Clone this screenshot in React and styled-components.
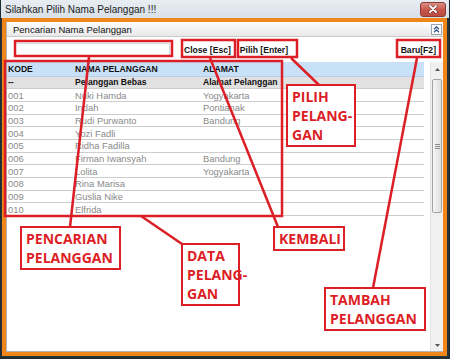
import styled, { createGlobalStyle } from "styled-components";

const GlobalStyle = createGlobalStyle`
  html, body { margin: 0; padding: 0; background: #ffffff; }
  body {
    font-family: "Liberation Sans", Arial, sans-serif;
    overflow: hidden;
  }
`;

const RED = "#dc1e26";

const customers = [
  { kode: "--", nama: "Pelanggan Bebas", alamat: "Alamat Pelanggan", bold: true },
  { kode: "001", nama: "Nuki Hamda", alamat: "Yogyakarta" },
  { kode: "002", nama: "Indah", alamat: "Pontianak" },
  { kode: "003", nama: "Rudi Purwanto", alamat: "Bandung" },
  { kode: "004", nama: "Yozi Fadli", alamat: "" },
  { kode: "005", nama: "Ridha Fadilla", alamat: "" },
  { kode: "006", nama: "Firman Iwansyah", alamat: "Bandung" },
  { kode: "007", nama: "Lolita", alamat: "Yogyakarta" },
  { kode: "008", nama: "Rina Marisa", alamat: "" },
  { kode: "009", nama: "Guslia Nike", alamat: "" },
  { kode: "010", nama: "Elfrida", alamat: "" },
];

const callouts = [
  { lines: ["PILIH", "PELANG-", "GAN"], left: 285, top: 84, width: 70 },
  { lines: ["PENCARIAN", "PELANGGAN"], left: 19, top: 226, width: 101 },
  { lines: ["DATA", "PELANG-", "GAN"], left: 180, top: 243, width: 59 },
  { lines: ["KEMBALI"], left: 272, top: 226, width: 72 },
  { lines: ["TAMBAH", "PELANGGAN"], left: 323, top: 287, width: 102 },
];

const highlights = [
  { x: 14, y: 41, w: 157, h: 15 },
  { x: 181, y: 40, w: 53, h: 17 },
  { x: 237, y: 40, w: 59, h: 17 },
  { x: 396, y: 40, w: 43, h: 17 },
  { x: 4, y: 61, w: 277, h: 155 },
];

const pointers = [
  [88, 57, 69, 227],
  [140, 216, 181, 244],
  [209, 58, 277, 227],
  [290, 58, 318, 85],
  [416, 58, 372, 288],
];

const Window = styled.div`
  position: relative;
  width: 450px;
  height: 359px;
  box-sizing: border-box;
  display: flex;
  flex-direction: column;
  background: #26343a;
  border: 1px solid #1d2a2e;
  border-top: none;
  padding: 0 2px 2px 1px;
`;

const TitleBar = styled.div`
  height: 18px;
  margin: 0 -2px 0 -1px;
  padding: 0 3px 0 4px;
  display: flex;
  align-items: center;
  background: linear-gradient(#e8edf2, #d8dfe7);
  font-size: 10px;
  color: #1b1b1b;
`;

const TitleText = styled.span`
  flex: 1;
  padding-top: 1px;
`;

const CloseButton = styled.div`
  width: 24px;
  height: 13px;
  display: flex;
  align-items: center;
  justify-content: center;
  border: 1px solid #8b3b33;
  border-radius: 3px;
  background: linear-gradient(#dc8f86, #c65448 55%, #bb4c42);
`;

const Frame = styled.div`
  flex: 1;
  display: flex;
  flex-direction: column;
  border: 4px solid #f0861a;
  min-height: 0;
`;

const Client = styled.div`
  flex: 1;
  display: flex;
  flex-direction: column;
  background: #ffffff;
  border-left: 1px solid #b3b3b3;
  border-bottom: 1px solid #b3b3b3;
  min-height: 0;
`;

const PanelHeader = styled.div`
  height: 14px;
  display: flex;
  align-items: center;
  padding: 0 1px 0 6px;
  background: linear-gradient(#fdfdfd, #e8e8e8);
  border-bottom: 1px solid #c9c9c9;
  font-size: 9.5px;
  color: #111;
`;

const PanelTitle = styled.span`
  flex: 1;
`;

const CollapseButton = styled.div`
  width: 9px;
  height: 9px;
  display: flex;
  align-items: center;
  justify-content: center;
  border: 1px solid #9aa6b4;
  background: #ffffff;
`;

const Toolbar = styled.div`
  height: 25px;
  display: flex;
  align-items: center;
  padding: 0 4px 0 8px;
  background: #ffffff;
`;

const SearchInput = styled.input`
  width: 155px;
  height: 13px;
  box-sizing: border-box;
  border: 1px solid #d8dde3;
  padding: 0 2px;
  font: 9px "Liberation Sans", Arial, sans-serif;
  outline: none;
`;

const ToolButton = styled.button`
  height: 17px;
  margin-left: ${(p) => p.$gap || 0}px;
  padding: 0 3px;
  border: none;
  background: #ffffff;
  font: bold 8.6px "Liberation Sans", Arial, sans-serif;
  color: #111;
  white-space: nowrap;
`;

const Grid = styled.div`
  flex: 1;
  display: flex;
  min-height: 0;
`;

const TableArea = styled.div`
  flex: 1;
  padding-right: 6px;
  background: #ffffff;
`;

const Row = styled.div`
  display: grid;
  grid-template-columns: 67px 128px 1fr;
  box-sizing: border-box;
  height: ${(p) => (p.$head ? 14.5 : 12.7)}px;
  align-items: center;
  padding-left: 1px;
  background: ${(p) => (p.$head ? "#c9e1f7" : p.$bold ? "#e1e1e1" : "#ffffff")};
  border-bottom: 1px solid ${(p) => (p.$head ? "#b5cfe8" : "#cdcdcd")};
  font-size: ${(p) => (p.$head || p.$bold ? 8.6 : 9.4)}px;
  font-weight: ${(p) => (p.$head || p.$bold ? "bold" : "normal")};
  color: ${(p) => (p.$head || p.$bold ? "#111" : "#8a8a8a")};
  white-space: nowrap;
`;

const Scrollbar = styled.div`
  width: 12px;
  display: flex;
  flex-direction: column;
  align-items: center;
  background: #f0f0f0;
  border-left: 1px solid #e4e4e4;
`;

const ArrowButton = styled.div`
  width: 11px;
  height: ${(p) => p.$h}px;
  display: flex;
  align-items: center;
  justify-content: center;
`;

const Thumb = styled.div`
  width: 10px;
  height: 134px;
  margin-top: 2px;
  display: flex;
  align-items: center;
  justify-content: center;
  box-sizing: border-box;
  border: 1px solid #a3a3a3;
  border-radius: 2px;
  background: linear-gradient(90deg, #f6f6f6, #dedede);
`;

const Track = styled.div`
  flex: 1;
`;

const Overlay = styled.svg`
  position: absolute;
  left: 0;
  top: 0;
  pointer-events: none;
`;

const Callout = styled.div`
  position: absolute;
  box-sizing: border-box;
  padding: 1px 0 1px 4px;
  border: 2.5px solid ${RED};
  background: #ffffff;
  color: ${RED};
  font-family: "Open Sans", "Noto Sans", sans-serif;
  font-weight: 700;
  font-size: 14px;
  line-height: 19px;
  white-space: nowrap;
`;

export default function App() {
  return (
    <>
      <GlobalStyle />
      <Window>
        <TitleBar>
          <TitleText>Silahkan Pilih Nama Pelanggan !!!</TitleText>
          <CloseButton>
            <svg width="10" height="8" viewBox="0 0 10 8">
              <path d="M2 1 L8 7 M8 1 L2 7" stroke="#6a2a24" strokeWidth="3" strokeLinecap="round" />
              <path d="M2 1 L8 7 M8 1 L2 7" stroke="#ffffff" strokeWidth="1.8" strokeLinecap="round" />
            </svg>
          </CloseButton>
        </TitleBar>
        <Frame>
          <Client>
            <PanelHeader>
              <PanelTitle>Pencarian Nama Pelanggan</PanelTitle>
              <CollapseButton>
                <svg width="7" height="7" viewBox="0 0 7 7">
                  <path d="M1 3.2 L3.5 0.8 L6 3.2 M1 6.2 L3.5 3.8 L6 6.2" stroke="#2b4d86" strokeWidth="1.2" fill="none" />
                </svg>
              </CollapseButton>
            </PanelHeader>
            <Toolbar>
              <SearchInput type="text" />
              <ToolButton $gap={11}>Close [Esc]</ToolButton>
              <ToolButton $gap={3}>Pilih [Enter]</ToolButton>
              <ToolButton style={{ marginLeft: "auto" }}>Baru[F2]</ToolButton>
            </Toolbar>
            <Grid>
              <TableArea>
                <Row $head>
                  <span>KODE</span>
                  <span>NAMA PELANGGAN</span>
                  <span>ALAMAT</span>
                </Row>
                {customers.map((c) => (
                  <Row key={c.kode} $bold={c.bold}>
                    <span>{c.kode}</span>
                    <span>{c.nama}</span>
                    <span>{c.alamat}</span>
                  </Row>
                ))}
              </TableArea>
              <Scrollbar>
                <ArrowButton $h={15}>
                  <svg width="5" height="3" viewBox="0 0 5 3">
                    <path d="M0 3 L2.5 0 L5 3 Z" fill="#555" />
                  </svg>
                </ArrowButton>
                <Thumb>
                  <svg width="5" height="5" viewBox="0 0 5 5">
                    <path d="M0 0.5 H5 M0 2.5 H5 M0 4.5 H5" stroke="#8a8a8a" strokeWidth="1" />
                  </svg>
                </Thumb>
                <Track />
                <ArrowButton $h={12}>
                  <svg width="5" height="3" viewBox="0 0 5 3">
                    <path d="M0 0 L2.5 3 L5 0 Z" fill="#555" />
                  </svg>
                </ArrowButton>
              </Scrollbar>
            </Grid>
          </Client>
        </Frame>

        <Overlay width="450" height="359" viewBox="0 0 450 359">
          {highlights.map((r, i) => (
            <rect key={i} x={r.x} y={r.y} width={r.w} height={r.h} fill="none" stroke={RED} strokeWidth="2.5" />
          ))}
          {pointers.map(([x1, y1, x2, y2], i) => (
            <line key={i} x1={x1} y1={y1} x2={x2} y2={y2} stroke={RED} strokeWidth="2.5" />
          ))}
        </Overlay>
        {callouts.map((c) => (
          <Callout key={c.lines.join("")} style={{ left: c.left, top: c.top, width: c.width }}>
            {c.lines.map((l) => (
              <div key={l}>{l}</div>
            ))}
          </Callout>
        ))}
      </Window>
    </>
  );
}
